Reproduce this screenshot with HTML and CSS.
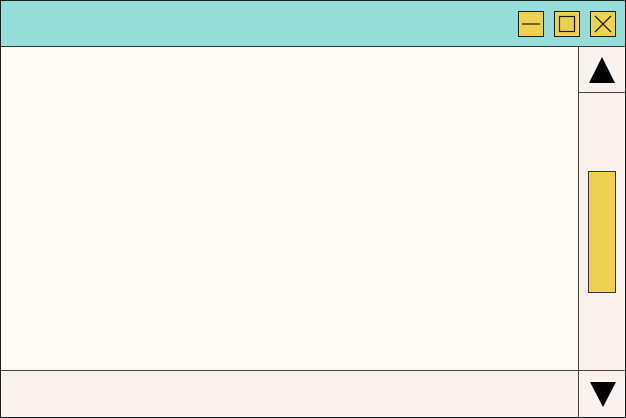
FILE: index.html
```html
<!DOCTYPE html>
<html>
<head>
<meta charset="utf-8">
<link rel="stylesheet" href="styles.css">
</head>
<body>
<div class="window">
  <div class="titlebar">
    <div class="btn" aria-label="minimize">
      <svg width="24" height="24" viewBox="0 0 24 24"><line x1="3" y1="12" x2="21" y2="12" stroke="#1a1a1a" stroke-width="1.2"/></svg>
    </div>
    <div class="btn" aria-label="maximize">
      <svg width="24" height="24" viewBox="0 0 24 24"><rect x="4.5" y="4.5" width="15" height="15" fill="none" stroke="#1a1a1a" stroke-width="1.2"/></svg>
    </div>
    <div class="btn" aria-label="close">
      <svg width="24" height="24" viewBox="0 0 24 24"><path d="M4 4 L20 20 M20 4 L4 20" stroke="#1a1a1a" stroke-width="1.1"/></svg>
    </div>
  </div>
  <div class="body">
    <div class="content"></div>
    <div class="scrollbar">
      <div class="arrow-box up">
        <svg width="26" height="26" viewBox="0 0 26 26"><polygon points="13,0 26,26 0,26" fill="#000"/></svg>
      </div>
      <div class="track">
        <div class="thumb"></div>
      </div>
    </div>
    <div class="status"></div>
    <div class="arrow-box down">
      <svg width="26" height="25" viewBox="0 0 26 25"><polygon points="0,0 26,0 13,25" fill="#000"/></svg>
    </div>
  </div>
</div>
</body>
</html>
```
FILE: styles.css
```css
html, body {
  margin: 0;
  padding: 0;
  background: #fff;
}
.window {
  width: 626px;
  height: 418px;
  box-sizing: border-box;
  border: 1px solid #1e1e1e;
  display: flex;
  flex-direction: column;
}
.titlebar {
  height: 45px;
  background: #95ddd8;
  border-bottom: 1px solid #333;
  display: flex;
  justify-content: flex-end;
  align-items: center;
  gap: 10px;
  padding-right: 9px;
}
.btn {
  width: 24px;
  height: 24px;
  background: #efd152;
  border: 1px solid #222;
  display: flex;
  align-items: center;
  justify-content: center;
}
.btn svg { display: block; }
.body {
  flex: 1;
  display: grid;
  grid-template-columns: 1fr 46px;
  grid-template-rows: 1fr 46px;
}
.content {
  background: #fffaf4;
  border-right: 1px solid #444;
  border-bottom: 1px solid #444;
}
.scrollbar {
  background: #f9f1ec;
  border-bottom: 1px solid #444;
  display: flex;
  flex-direction: column;
}
.arrow-box {
  display: flex;
  align-items: center;
  justify-content: center;
  background: #f9f1ec;
}
.arrow-box svg { display: block; }
.arrow-box.up {
  border-bottom: 1px solid #444;
  padding-top: 1px;
  box-sizing: border-box;
  height: 46px;
}
.arrow-box.down {
  padding-top: 1px;
  padding-left: 1px;
}
.track {
  flex: 1;
  padding: 78px 0 0 9px;
}
.thumb {
  width: 26px;
  height: 120px;
  background: #efd152;
  border: 1px solid #333;
}
.status {
  background: #f9f1ec;
  border-right: 1px solid #444;
}
```
